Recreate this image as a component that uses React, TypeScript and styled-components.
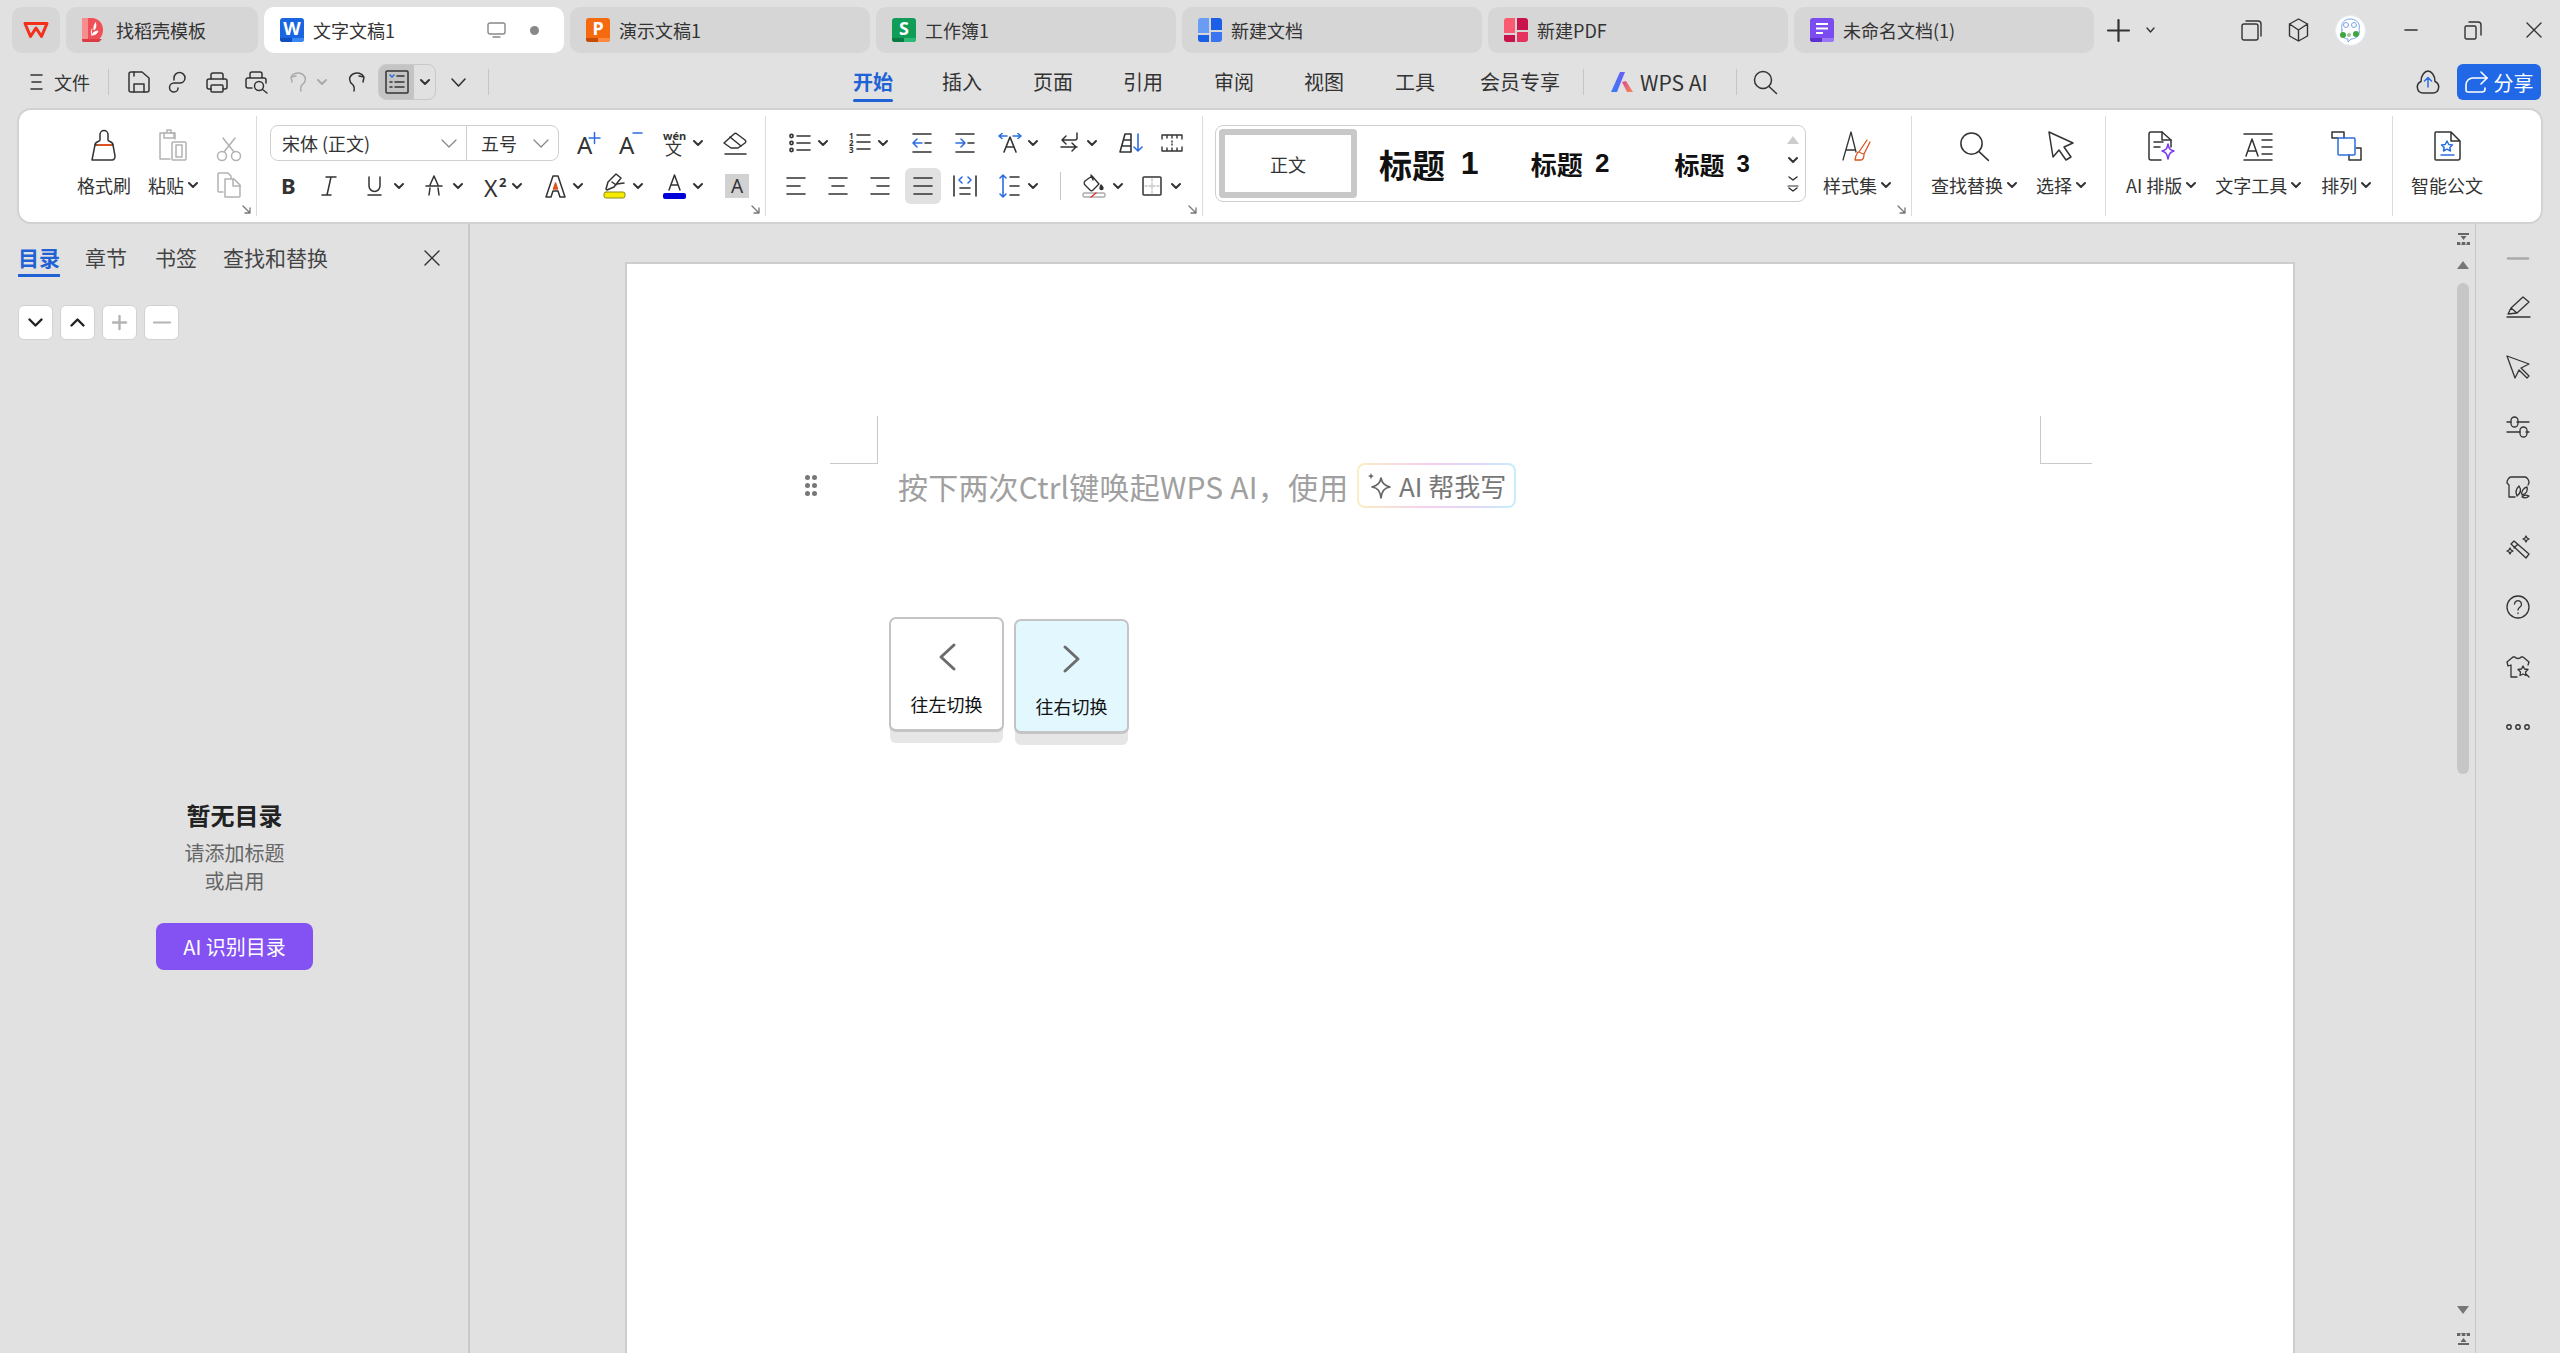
import React from "react";
import styled, { createGlobalStyle } from "styled-components";

const FONT = `"Noto Sans CJK SC", "Noto Sans", sans-serif`;

const GlobalStyle = createGlobalStyle`
  html, body { margin: 0; padding: 0; background: #e1e1e1; }
  body { font-family: ${FONT}; color: #333; }
`;

const Page = styled.div`
  width: 2560px;
  height: 1353px;
  overflow: hidden;
  display: flex;
  flex-direction: column;
  background: #e1e1e1;
`;

/* ---------- icon helpers ---------- */

const Ic = styled.svg.attrs<{ $w: number; $h: number; $c?: string; $sw?: number }>((p) => ({
  width: p.$w,
  height: p.$h,
  viewBox: `0 0 ${p.$w} ${p.$h}`,
  fill: "none",
  stroke: p.$c || "#333",
  strokeWidth: p.$sw || 1.5,
  strokeLinecap: "round",
  strokeLinejoin: "round",
}))`
  flex-shrink: 0;
  display: block;
  overflow: visible;
`;

const Gl = styled.text<{ $c?: string }>`
  fill: ${(p) => p.$c || "#333"};
  stroke: none;
  font-family: "Noto Sans", "Noto Sans CJK SC", sans-serif;
`;

const Chev = ({ c }: { c?: string }) => (
  <Ic $w={10} $h={6} $sw={2} $c={c || "#333"}>
    <path d="M1 1l4 4 4-4" />
  </Ic>
);

const SoftChev = () => (
  <Ic $w={16} $h={9} $sw={1.3} $c="#888">
    <path d="M1 1l7 7 7-7" />
  </Ic>
);

/* ---------- title bar ---------- */

const TabBar = styled.div`
  height: 56px;
  flex: none;
  display: flex;
  align-items: flex-start;
  padding: 7px 0 0 12px;
  gap: 6px;
  box-sizing: border-box;
`;

const LogoTab = styled.div`
  width: 48px;
  height: 46px;
  border-radius: 10px;
  background: #d6d6d6;
  display: flex;
  align-items: center;
  justify-content: center;
`;

const Tab = styled.div<{ $active?: boolean; $w?: number; $gap?: number }>`
  width: ${(p) => p.$w || 300}px;
  height: 46px;
  box-sizing: border-box;
  padding: 0 25px 0 16px;
  border-radius: 10px;
  background: ${(p) => (p.$active ? "#fff" : "#d6d6d6")};
  display: flex;
  align-items: center;
  gap: ${(p) => p.$gap || 9}px;
`;

const TabLabel = styled.span`
  font-size: 18px;
  line-height: 26px;
  color: #333;
  white-space: nowrap;
`;

const TabStatus = styled.div`
  margin-left: auto;
  display: flex;
  align-items: center;
  gap: 24px;
`;

const UnsavedDot = styled.span`
  width: 9px;
  height: 9px;
  border-radius: 50%;
  background: #888;
`;

const TabActions = styled.div`
  display: flex;
  align-items: center;
  height: 46px;
  padding-left: 7px;
  gap: 16px;
`;

const WindowButtons = styled.div`
  margin-left: 70px;
  display: flex;
  align-items: center;
  height: 46px;
`;

const WinSlot = styled.div<{ $ml: number }>`
  margin-left: ${(p) => p.$ml}px;
  display: flex;
`;

const Tile = ({ color, dark, light, letter }: { color: string; dark: string; light: string; letter: string }) => (
  <Ic $w={24} $h={24} $c="none">
    <rect width={24} height={24} rx={3} fill={color} />
    <path d="M0 20h12v4H3a3 3 0 0 1-3-3z" fill={dark} />
    <path d="M12 20h12v1a3 3 0 0 1-3 3h-9z" fill={light} />
    <Gl x={12} y={17} fontSize={18} fontWeight={700} textAnchor="middle" $c="#fff">
      {letter}
    </Gl>
  </Ic>
);

const Quad = ({ a, b, c, d }: { a: string; b: string; c: string; d: string }) => (
  <Ic $w={24} $h={24} $c="none">
    <path d="M3 0h8v15H0V3a3 3 0 0 1 3-3z" fill={a} />
    <path d="M13 0h8a3 3 0 0 1 3 3v9H13z" fill={b} />
    <path d="M0 17h11v7H3a3 3 0 0 1-3-3z" fill={c} />
    <path d="M13 14h11v7a3 3 0 0 1-3 3h-8z" fill={d} />
  </Ic>
);

const DaokeIcon = () => (
  <Ic $w={22} $h={24} $c="none">
    <path d="M2 0h8a11 12 0 0 1 0 24H2a2 2 0 0 1-2-2V2a2 2 0 0 1 2-2z" fill="#ef5058" />
    <path d="M2 0h4v24H2a2 2 0 0 1-2-2V2a2 2 0 0 1 2-2z" fill="#f88d8e" />
    <path d="M0 21h20l-3 3H2a2 2 0 0 1-2-2z" fill="#d93c42" />
    <path d="M13.5 5c1 3 .5 5-1.5 7 -.5-3 0-5 1.500-7zM10 17c3 0 5-1 6-4-3 0-5 1-6 4zM10 17c-1-2-1-4 0-6" fill="#fff" stroke="#fff" strokeWidth={0.8} />
  </Ic>
);

const DocTile = () => (
  <Ic $w={24} $h={24} $c="none">
    <rect width={24} height={24} rx={3} fill="#7b4cf0" />
    <path d="M0 20h12v4H3a3 3 0 0 1-3-3z" fill="#5d30cf" />
    <path d="M12 20h12v1a3 3 0 0 1-3 3h-9z" fill="#9a78f5" />
    <path d="M6 6h12M6 10.500h12M6 15h7" stroke="#fff" strokeWidth={2} strokeLinecap="butt" />
  </Ic>
);

const WpsLogo = () => (
  <Ic $w={26} $h={18} $c="#f2301c" $sw={3}>
    <path d="M2 2.500h22l-5.500 13L13 7l-5.500 8.500z" />
  </Ic>
);

const Monitor = () => (
  <Ic $w={19} $h={16} $c="#888" $sw={1.4}>
    <rect x={1} y={1} width={17} height={11} rx={2} />
    <path d="M6 15h7" />
  </Ic>
);

/* ---------- menu bar ---------- */

const MenuBar = styled.div`
  height: 54px;
  flex: none;
  display: flex;
  align-items: center;
  box-sizing: border-box;
  padding-bottom: 2px;
`;

const QuickAccess = styled.div`
  flex: 0 0 853px;
  box-sizing: border-box;
  padding-left: 30px;
  display: flex;
  align-items: center;
`;

const Slot = styled.div<{ $ml?: number; $gap?: number }>`
  display: flex;
  align-items: center;
  flex-shrink: 0;
  margin-left: ${(p) => p.$ml || 0}px;
  gap: ${(p) => (p.$gap === undefined ? 7 : p.$gap)}px;
`;

const FileLabel = styled.span`
  font-size: 18px;
  margin-left: 11px;
`;

const VLine = styled.span<{ $ml?: number; $h?: number }>`
  flex: none;
  width: 1px;
  height: ${(p) => p.$h || 26}px;
  background: #c6c6c6;
  margin-left: ${(p) => p.$ml || 0}px;
`;

const OutlineToggle = styled.div`
  margin-left: 13px;
  width: 58px;
  height: 36px;
  box-sizing: border-box;
  border: 1px solid #c9c9c9;
  border-radius: 8px;
  display: flex;
  overflow: hidden;
`;

const OutlineIcon = styled.div`
  width: 35px;
  background: #c4c4c4;
  display: flex;
  align-items: center;
  justify-content: center;
`;

const OutlineCaret = styled.div`
  flex: 1;
  display: flex;
  align-items: center;
  justify-content: center;
`;

const RibbonTabs = styled.div`
  display: flex;
  align-items: center;
  height: 52px;
`;

const RibbonTab = styled.div<{ $active?: boolean; $ml?: number }>`
  position: relative;
  font-size: 20px;
  line-height: 52px;
  height: 52px;
  margin-left: ${(p) => p.$ml || 0}px;
  color: ${(p) => (p.$active ? "#1e62d6" : "#333")};
  font-weight: ${(p) => (p.$active ? 700 : 400)};
  &::after {
    content: "";
    display: ${(p) => (p.$active ? "block" : "none")};
    position: absolute;
    left: 0;
    right: 0;
    bottom: 6px;
    height: 3px;
    border-radius: 2px;
    background: #1e62d6;
  }
`;

const AiLabel = styled.span`
  font-size: 21px;
  color: #333;
`;

const CloudShare = styled.div`
  margin-left: auto;
  padding-right: 19px;
  display: flex;
  align-items: center;
`;

const ShareButton = styled.div`
  margin-left: 17px;
  width: 84px;
  height: 36px;
  border-radius: 6px;
  background: #2068e6;
  color: #fff;
  font-size: 20px;
  display: flex;
  align-items: center;
  justify-content: center;
  gap: 5px;
`;

/* ---------- ribbon ---------- */

const Ribbon = styled.div`
  flex: none;
  margin: 0 19px;
  height: 112px;
  box-sizing: border-box;
  padding: 6px 0;
  background: #fff;
  border-radius: 12px;
  box-shadow: 0 0 0 2px #d2d2d2;
  display: flex;
`;

const Group = styled.div<{ $w: number; $last?: boolean; $pl?: number }>`
  position: relative;
  flex: 0 0 ${(p) => p.$w}px;
  box-sizing: border-box;
  padding: 9px 0 0 ${(p) => p.$pl || 0}px;
  border-right: ${(p) => (p.$last ? "none" : "1px solid #dcdcdc")};
`;

const InlineGroup = styled(Group)`
  display: flex;
`;

const Rows = styled.div`
  display: flex;
  flex-direction: column;
  gap: 7px;
`;

const Row = styled.div`
  display: flex;
  align-items: center;
  height: 36px;
`;

const Launcher = styled.span`
  position: absolute;
  right: 5px;
  bottom: 2px;
  display: flex;
`;

const LauncherIcon = () => (
  <Launcher>
    <Ic $w={9} $h={9} $c="#777" $sw={1.3}>
      <path d="M1 1l7 7M8 3v5H3" />
    </Ic>
  </Launcher>
);

const LargeTool = styled.div<{ $ml?: number; $w?: number }>`
  flex: none;
  width: ${(p) => (p.$w ? `${p.$w}px` : "auto")};
  margin-left: ${(p) => p.$ml || 0}px;
  display: flex;
  flex-direction: column;
  align-items: center;
  gap: 6px;
`;

const LargeIcon = styled.div`
  height: 36px;
  display: flex;
  align-items: flex-end;
`;

const LargeLabel = styled.div`
  height: 36px;
  display: flex;
  align-items: center;
  gap: 4px;
  font-size: 18px;
  white-space: nowrap;
  color: #333;
`;

const FontBox = styled.div`
  width: 289px;
  height: 36px;
  box-sizing: border-box;
  border: 1px solid #cfcfcf;
  border-radius: 8px;
  display: flex;
`;

const FontField = styled.div<{ $w?: number }>`
  width: ${(p) => (p.$w ? `${p.$w}px` : "auto")};
  flex: ${(p) => (p.$w ? "none" : "1")};
  box-sizing: border-box;
  padding: 0 9px 0 ${(p) => (p.$w ? 11 : 14)}px;
  border-right: ${(p) => (p.$w ? "1px solid #cfcfcf" : "none")};
  display: flex;
  align-items: center;
  justify-content: space-between;
`;

const FontValue = styled.span`
  font-size: 18px;
  line-height: 26px;
  white-space: nowrap;
`;

const ShadedIcon = styled.div`
  margin-left: 22px;
  width: 24px;
  height: 24px;
  background: #d2d2d2;
  display: flex;
  align-items: center;
  justify-content: center;
  font-size: 19px;
  line-height: 24px;
  font-family: "Noto Sans", sans-serif;
`;

const ActiveAlign = styled.div`
  margin-left: 15px;
  width: 36px;
  height: 36px;
  border-radius: 6px;
  background: #e1e1e1;
  display: flex;
  align-items: center;
  justify-content: center;
`;

const Gallery = styled.div`
  width: 591px;
  height: 77px;
  box-sizing: border-box;
  border: 1px solid #cfcfcf;
  border-radius: 8px;
  padding: 3px 0 3px 3px;
  display: flex;
  align-items: center;
`;

const StyleCurrent = styled.div`
  width: 138px;
  height: 69px;
  box-sizing: border-box;
  border: 6px solid #c8c8c8;
  border-radius: 4px;
  display: flex;
  align-items: center;
  justify-content: center;
  font-size: 18px;
  color: #333;
`;

const StyleHeading = styled.div<{ $ml: number; $size: number; $num: number }>`
  margin-left: ${(p) => p.$ml}px;
  font-size: ${(p) => p.$size}px;
  font-weight: 700;
  color: #111;
  display: flex;
  align-items: center;
  gap: 0.48em;
  white-space: nowrap;
  & > b {
    font-size: ${(p) => p.$num}px;
    font-family: "Liberation Sans", sans-serif;
  }
`;

const GalleryScroll = styled.div`
  margin-left: auto;
  width: 24px;
  height: 66px;
  display: flex;
  flex-direction: column;
  align-items: center;
  justify-content: space-between;
  padding: 5px 0;
  box-sizing: border-box;
`;

/* ---------- main area ---------- */

const Main = styled.div`
  flex: 1;
  min-height: 0;
  margin-top: 2px;
  display: flex;
`;

const Panel = styled.aside`
  flex: 0 0 470px;
  box-sizing: border-box;
  border-right: 2px solid #c8c8c8;
  padding: 0 0 0 18px;
  display: flex;
  flex-direction: column;
`;

const PanelHeader = styled.div`
  height: 50px;
  display: flex;
  align-items: flex-start;
  padding-right: 28px;
`;

const PanelTab = styled.div<{ $active?: boolean; $ml?: number }>`
  margin-left: ${(p) => p.$ml || 0}px;
  font-size: 21px;
  line-height: 30px;
  padding-top: 18px;
  height: 53px;
  box-sizing: border-box;
  white-space: nowrap;
  color: ${(p) => (p.$active ? "#1e62d6" : "#444")};
  font-weight: ${(p) => (p.$active ? 700 : 400)};
  border-bottom: ${(p) => (p.$active ? "3px solid #1e62d6" : "0")};
`;

const PanelClose = styled.div`
  margin-left: auto;
  padding-top: 26px;
`;

const OutlineTools = styled.div`
  margin-top: 31px;
  display: flex;
  gap: 7px;
`;

const OutlineTool = styled.div`
  width: 35px;
  height: 35px;
  box-sizing: border-box;
  background: #fff;
  border: 1px solid #d2d2d2;
  border-radius: 6px;
  display: flex;
  align-items: center;
  justify-content: center;
`;

const EmptyState = styled.div`
  width: 433px;
  margin-top: 458px;
  display: flex;
  flex-direction: column;
  align-items: center;
`;

const EmptyTitle = styled.div`
  font-size: 24px;
  font-weight: 700;
  line-height: 34px;
  color: #222;
`;

const EmptyHint = styled.div`
  margin-top: 7px;
  font-size: 20px;
  line-height: 28px;
  color: #666;
  text-align: center;
`;

const AiButton = styled.div`
  margin-top: 28px;
  width: 157px;
  height: 47px;
  border-radius: 8px;
  background: #8452f2;
  color: #fff;
  font-size: 20px;
  display: flex;
  align-items: center;
  justify-content: center;
`;

const DocArea = styled.div`
  flex: 1;
  min-width: 0;
  padding-left: 155px;
  padding-top: 38px;
  overflow: hidden;
`;

const Sheet = styled.div`
  width: 1670px;
  height: 1100px;
  box-sizing: border-box;
  background: #fff;
  border: 2px solid #cdcdcd;
  padding-top: 152px;
`;

const CropMarks = styled.div`
  display: flex;
  justify-content: space-between;
  padding: 0 201px 0 203px;
`;

const CropMark = styled.div<{ $side: "left" | "right" }>`
  width: ${(p) => (p.$side === "left" ? 48 : 52)}px;
  height: 48px;
  box-sizing: border-box;
  border-bottom: 1px solid #c9c9c9;
  border-${(p) => (p.$side === "left" ? "right" : "left")}: 1px solid #c9c9c9;
`;

const PromptRow = styled.div`
  margin-top: -1px;
  padding-left: 178px;
  display: flex;
  align-items: center;
  height: 45px;
`;

const DragHandle = styled.div`
  width: 12px;
  display: grid;
  grid-template-columns: 5px 5px;
  justify-content: space-between;
  row-gap: 3px;
  & > i {
    width: 5px;
    height: 5px;
    border-radius: 50%;
    background: #777;
  }
`;

const PromptText = styled.div`
  margin-left: 81px;
  font-size: 30px;
  letter-spacing: 0.2px;
  color: #a0a0a0;
  white-space: nowrap;
  width: 447px;
`;

const AiChip = styled.div`
  margin-left: 12px;
  width: 159px;
  height: 45px;
  box-sizing: border-box;
  border: 2px solid transparent;
  border-radius: 8px;
  background: linear-gradient(#fff, #fff) padding-box,
    linear-gradient(90deg, #fbeec4, #f5cfee 45%, #dcd8f8 75%, #c9eefb) border-box;
  display: flex;
  align-items: center;
  gap: 6px;
  padding-left: 8px;
  font-size: 26px;
  color: #777;
  white-space: nowrap;
`;

const KeysRow = styled.div`
  margin: 109px 0 0 262px;
  display: flex;
  align-items: flex-start;
  gap: 10px;
`;

const KeyCap = styled.div<{ $on?: boolean }>`
  width: 115px;
  height: 115px;
  margin-top: ${(p) => (p.$on ? 2 : 0)}px;
  box-sizing: border-box;
  border: 2px solid #c4c4c4;
  border-bottom-width: 3px;
  border-radius: 7px;
  background: ${(p) => (p.$on ? "#e2f7fe" : "#fff")};
  box-shadow: 0 12px 0 -1px #e6e6e6;
  display: flex;
  flex-direction: column;
  align-items: center;
  padding-top: 24px;
  gap: 20px;
  font-size: 18px;
  color: #111;
`;

const ScrollColumn = styled.div`
  flex: 0 0 24px;
  box-sizing: border-box;
  padding: 9px 0 0 6px;
  display: flex;
  flex-direction: column;
`;

const ScrollThumb = styled.div`
  width: 12px;
  height: 491px;
  border-radius: 6px;
  background: #c6c6c6;
  margin-top: 14px;
`;

const ScrollFoot = styled.div`
  margin-top: auto;
  padding-bottom: 8px;
  display: flex;
  flex-direction: column;
  gap: 18px;
`;

const ScrollUp = styled.div`
  margin-top: 15px;
`;

const SideBar = styled.div`
  flex: 0 0 85px;
  box-sizing: border-box;
  border-left: 1px solid #c8c8c8;
  padding-top: 15px;
  display: flex;
  flex-direction: column;
  align-items: center;
`;

const SideCell = styled.div<{ $h?: number }>`
  height: ${(p) => p.$h || 60}px;
  display: flex;
  align-items: center;
  justify-content: center;
`;

/* ---------- glyph-size drawings ---------- */

const MenuLines = () => (
  <Ic $w={13} $h={16} $sw={1.6}>
    <path d="M1 1h11M2 8h9M1 15h11" />
  </Ic>
);

const ToolbarSave = () => (
  <Ic $w={22} $h={22}>
    <path d="M3 1h11l7 6v12a2 2 0 0 1-2 2H3a2 2 0 0 1-2-2V3a2 2 0 0 1 2-2z" />
    <path d="M6 21v-8h10v8M6 1v4" />
  </Ic>
);

const ToolbarLink = () => (
  <Ic $w={19} $h={22}>
    <path d="M6 9V7a5.500 5.500 0 0 1 11 0c0 3-2.500 5-5.500 5H6a4.500 4.500 0 0 0 0 9c2.500 0 4-2 4-4" />
  </Ic>
);

const ToolbarPrint = () => (
  <Ic $w={22} $h={21}>
    <path d="M5 7V3a2 2 0 0 1 2-2h8a2 2 0 0 1 2 2v4" />
    <path d="M5 17H3a2 2 0 0 1-2-2V9a2 2 0 0 1 2-2h16a2 2 0 0 1 2 2v6a2 2 0 0 1-2 2h-2" />
    <rect x={5} y={13} width={12} height={7} rx={1} />
  </Ic>
);

const ToolbarPreview = () => (
  <Ic $w={23} $h={23}>
    <path d="M5 7V3a2 2 0 0 1 2-2h8a2 2 0 0 1 2 2v4M7 17H3a2 2 0 0 1-2-2V9a2 2 0 0 1 2-2h16a2 2 0 0 1 2 2v3" />
    <circle cx={14} cy={15} r={4.500} />
    <path d="M17.500 18.500L22 22" />
  </Ic>
);

const ToolbarUndo = ({ c, flip }: { c: string; flip?: boolean }) => (
  <Ic $w={17} $h={22} $c={c} style={flip ? { transform: "scaleX(-1)" } : undefined}>
    <path d="M1 6c2-4 7-5 11-3 5 3 4 8 0 11-1 1-1.500 3-1 6M1 6l1 5M1 6l5-1" />
  </Ic>
);

const OutlineGlyph = () => (
  <Ic $w={24} $h={24}>
    <rect x={1} y={1} width={22} height={22} rx={1} />
    <path d="M5 5l2 2 2-2" stroke="#2b6de0" />
    <path d="M12 6h7M5 12h2M10 12h9M5 17h2M10 17h9" />
  </Ic>
);

const AiMark = () => (
  <Ic $w={24} $h={22} $c="none">
    <defs>
      <linearGradient id="aiL" x1="0" y1="1" x2="1" y2="0">
        <stop offset="0" stopColor="#3b7bf6" />
        <stop offset="1" stopColor="#6a5cf5" />
      </linearGradient>
      <linearGradient id="aiR" x1="0" y1="0" x2="1" y2="1">
        <stop offset="0" stopColor="#e0458f" />
        <stop offset="1" stopColor="#f58a5a" />
      </linearGradient>
    </defs>
    <path d="M10 1h5L7 21H1z" fill="url(#aiL)" />
    <path d="M12 11l4-1 7 11h-6z" fill="url(#aiR)" />
  </Ic>
);

const SearchGlyph = ({ size, sw }: { size: number; sw?: number }) => (
  <Ic $w={size} $h={size} $sw={sw || 1.5}>
    <g transform={`scale(${size / 24})`}>
      <circle cx={10} cy={10} r={8.500} />
      <path d="M16 16.500l7.500 7" />
    </g>
  </Ic>
);

const CloudUp = () => (
  <Ic $w={24} $h={28}>
    <path d="M7 25a6 6 0 0 1-2-11.500C5 7 9 3 12 3s7 4 7 10.500A6 6 0 0 1 17 25z" />
    <path d="M12 19v-9M8.500 13l3.500-3.500 3.500 3.500" stroke="#2b6de0" />
  </Ic>
);

const ShareArrow = () => (
  <Ic $w={24} $h={24} $c="#fff" $sw={1.6}>
    <path d="M3 22h14a3 3 0 0 0 3-3v-1M3 22a2 2 0 0 1-2-2v-5c0-4 3-7 7-7h14" />
    <path d="M16 2l6 6-6 6" />
  </Ic>
);

const BrushGlyph = () => (
  <Ic $w={30} $h={31}>
    <path d="M11 10V4.500a4 4 0 0 1 8 0V10c0 2 5 1 5 5H6c0-4 5-3 5-5z" />
    <path d="M9 15h13" stroke="#d9541e" strokeWidth={2} />
    <path d="M6 15L3 30h20c2 0 3-2 3-4l-2-11" />
  </Ic>
);

const PasteGlyph = () => (
  <Ic $w={30} $h={32} $c="#b2b2b2">
    <path d="M7 4H2v26h10M17 10V4h-5" />
    <path d="M6 4h10v5H6zM9 4V1h4v3" />
    <rect x={14} y={13} width={14} height={18} rx={1} />
    <path d="M18 16h6v12h-6z" />
  </Ic>
);

const ScissorsGlyph = () => (
  <Ic $w={26} $h={24} $c="#b2b2b2">
    <circle cx={6} cy={19} r={4.500} />
    <circle cx={20} cy={19} r={4.500} />
    <path d="M8 15L19 1M18 15L7 1" />
  </Ic>
);

const CopyGlyph = () => (
  <Ic $w={24} $h={26} $c="#b2b2b2">
    <path d="M6 20H2a1 1 0 0 1-1-1V2a1 1 0 0 1 1-1h9l3 3v3" />
    <path d="M8 7h9l6 6v11a1 1 0 0 1-1 1H8z" />
    <path d="M16 7v7h7" />
  </Ic>
);

const FontGrow = ({ plus }: { plus: boolean }) => (
  <Ic $w={24} $h={26} $c="#2b6de0">
    <Gl x={0} y={24} fontSize={24}>A</Gl>
    {plus ? <path d="M12 8h11M17.500 2.500v11" /> : <path d="M14 3h9" />}
  </Ic>
);

const PinyinGlyph = () => (
  <Ic $w={26} $h={24}>
    <Gl x={0} y={9} fontSize={11} fontWeight={700}>wén</Gl>
    <Gl x={2} y={24} fontSize={17} style={{ fontFamily: FONT }}>文</Gl>
  </Ic>
);

const EraserGlyph = () => (
  <Ic $w={24} $h={23}>
    <path d="M1 11l10-9c1-1 2-1 3 0l8 6c1 1 1 2 0 3l-7 5H8z" />
    <path d="M7 5l11 9M2 22h21" />
  </Ic>
);

const LetterBold = () => (
  <Ic $w={14} $h={22} $c="none">
    <Gl x={0} y={19} fontSize={22} fontWeight={700}>B</Gl>
  </Ic>
);

const LetterItalic = () => (
  <Ic $w={16} $h={22}>
    <path d="M5 2h10M1 20h9M10 2L6 20" />
  </Ic>
);

const LetterUnderline = () => (
  <Ic $w={15} $h={22}>
    <path d="M2 2v9a5.500 5.500 0 0 0 11 0V2M1 20h13" />
  </Ic>
);

const LetterStrike = () => (
  <Ic $w={18} $h={22}>
    <path d="M1 11h16M9 1L5 10M9 1l4 9M5 13l-1 7M13 13l1 7" />
  </Ic>
);

const LetterSuper = () => (
  <Ic $w={24} $h={24} $c="none">
    <Gl x={0} y={23} fontSize={23}>X</Gl>
    <Gl x={15} y={13} fontSize={13} fontWeight={700}>2</Gl>
  </Ic>
);

const LetterEffect = () => (
  <Ic $w={21} $h={24}>
    <path d="M1 23L8 2h5l7 21h-5l-2-6H8l-2 6z" />
    <path d="M10.500 9l-2 6h4z" fill="#d9541e" stroke="#d9541e" />
  </Ic>
);

const HighlightGlyph = () => (
  <Ic $w={23} $h={26}>
    <path d="M3 16l2-7 8-8 5 4-7 9-7 3zM9 9l4 3M14 11l7-1" />
    <rect x={1} y={19} width={21} height={6} rx={2} fill="#f5ea00" stroke="#8d8a20" strokeWidth={1} />
  </Ic>
);

const ColorGlyph = () => (
  <Ic $w={23} $h={26}>
    <path d="M6 17L11.500 2 17 17M8 12h7" />
    <rect x={0} y={20} width={23} height={6} rx={2} fill="#0000d8" stroke="none" />
  </Ic>
);

const BulletList = () => (
  <Ic $w={22} $h={20} $sw={1.6}>
    <circle cx={2.500} cy={3} r={1.600} />
    <circle cx={2.500} cy={10} r={1.600} />
    <circle cx={2.500} cy={17} r={1.600} />
    <path d="M8 3h13M8 10h13M8 17h13" />
  </Ic>
);

const NumberList = () => (
  <Ic $w={22} $h={22} $sw={1.6}>
    <Gl x={0} y={7} fontSize={8} fontWeight={700}>1</Gl>
    <Gl x={0} y={14} fontSize={8} fontWeight={700}>2</Gl>
    <Gl x={0} y={21} fontSize={8} fontWeight={700}>3</Gl>
    <path d="M8 3h13M8 10h13M8 17h13" />
  </Ic>
);

const IndentGlyph = ({ out }: { out: boolean }) => (
  <Ic $w={20} $h={20} $sw={1.6}>
    <path d="M1 1h18M1 19h18M13 10h6" />
    {out ? (
      <path d="M1 10h9M5 6l-4 4 4 4" stroke="#2b6de0" />
    ) : (
      <path d="M1 10h9M6 6l4 4-4 4" stroke="#2b6de0" />
    )}
  </Ic>
);

const TextDirection = () => (
  <Ic $w={24} $h={20} $sw={1.6} $c="#2b6de0">
    <path d="M1 3h8M4 0.500L1 3l3 2.500M15 3h8M20 0.500L23 3l-3 2.500" />
    <path d="M6 19L12 4l6 15M8 14h8" stroke="#333" />
  </Ic>
);

const SwapGlyph = () => (
  <Ic $w={18} $h={22} $sw={1.5}>
    <path d="M17 1v5a2 2 0 0 1-2 2H2M6 4L2 8l4 4M1 15h16M12 11l4 4-4 4" />
  </Ic>
);

const SortGlyph = () => (
  <Ic $w={24} $h={20} $sw={1.6}>
    <path d="M1 19L6 1h6v18zM3 13h9M5 7h7" />
    <path d="M19 1v17M15 14l4 4 4-4" stroke="#2b6de0" />
  </Ic>
);

const RulerGlyph = () => (
  <Ic $w={22} $h={18} $sw={1.4}>
    <path d="M1 1h20M1 1v4M21 1v4M6 1v3M11 1v3M16 1v3M1 17h20M1 17v-4M21 17v-4M6 17v-3M11 17v-3M16 17v-3M11 7v1M11 10v1" />
  </Ic>
);

const AlignGlyph = ({ mode }: { mode: "left" | "center" | "right" | "full" }) => {
  const mid = { left: "M1 10h13", center: "M4 10h12", right: "M7 10h12", full: "M1 10h18" }[mode];
  return (
    <Ic $w={20} $h={20} $sw={1.6}>
      <path d="M1 2h18M1 18h18" />
      <path d={mid} />
    </Ic>
  );
};

const DistributeGlyph = () => (
  <Ic $w={24} $h={22} $sw={1.6}>
    <path d="M1 1v20M23 1v20M7 13h10M7 19h10" />
    <path d="M9 2L6 5l3 3M15 2l3 3-3 3" stroke="#2b6de0" />
  </Ic>
);

const SpacingGlyph = () => (
  <Ic $w={21} $h={24} $sw={1.6}>
    <path d="M11 3h9M11 12h9M11 21h9" />
    <path d="M4 1v22M1 4l3-3 3 3M1 20l3 3 3-3" stroke="#2b6de0" />
  </Ic>
);

const FillGlyph = () => (
  <Ic $w={24} $h={24} $sw={1.4}>
    <path d="M3 7l7-5 7 8-6 6c-1 1-2 1-3 0L3 11c-1-1-1-3 0-4zM9 1l2 5" />
    <path d="M19 11c1 1 2 2 2 3a1.500 1.500 0 0 1-3 0c0-1 .5-2 1-3z" fill="#333" />
    <rect x={1} y={19} width={22} height={4} rx={1.500} stroke="#aaa" />
    <path d="M9 23l5-4" stroke="#e03030" />
  </Ic>
);

const BorderGlyph = () => (
  <Ic $w={20} $h={20} $sw={1.5}>
    <rect x={1} y={1} width={18} height={18} rx={1} />
    <path d="M10 3v14M3 10h14" stroke="#c8c8c8" strokeDasharray="2 2" />
  </Ic>
);

const StyleBrush = () => (
  <Ic $w={30} $h={30} $sw={1.3}>
    <path d="M1 29L9 1l5 20M4 19h9" />
    <path d="M17 21l8-12M22 23l6-12M16 21c-2 3-3 5-3 8h6c3 0 3-4 3-6z" stroke="#d9541e" />
  </Ic>
);

const CursorGlyph = () => (
  <Ic $w={28} $h={30}>
    <path d="M2 1l24 11-9 4 7 10-5 3-7-10-6 7z" />
  </Ic>
);

const AiLayout = () => (
  <Ic $w={28} $h={30}>
    <path d="M14 29H4a2 2 0 0 1-2-2V3a2 2 0 0 1 2-2h11l9 8v7" />
    <path d="M15 1v8h9M7 11h9M7 16h6" />
    <path d="M21 13c1 5 2 6 6 7-4 1-5 3-6 8-1-5-2-7-6-8 4-1 5-2 6-7z" stroke="#7a3cf2" />
  </Ic>
);

const TextTool = () => (
  <Ic $w={30} $h={28} $sw={1.5}>
    <path d="M1 1h28M1 27h28M3 23L9 6l6 17M5 18h8M19 7h10M19 14h10M19 21h10" />
  </Ic>
);

const ArrangeGlyph = () => (
  <Ic $w={31} $h={30}>
    <path d="M7 7H1V1h12v6M25 17h5v12H18v-5" />
    <rect x={7} y={7} width={17} height={17} rx={1} stroke="#2b6de0" />
  </Ic>
);

const SmartDoc = () => (
  <Ic $w={27} $h={30}>
    <path d="M2 1h15l9 9v17a2 2 0 0 1-2 2H2a1 1 0 0 1-1-1V2a1 1 0 0 1 1-1zM17 1v9h9" />
    <path d="M13 10l1.800 3.500 3.700.5-2.700 2.500.7 3.500-3.500-1.800-3.500 1.800.7-3.500L7.500 14l3.700-.5z" stroke="#2b6de0" />
    <path d="M7 24h13" stroke="#2b6de0" />
  </Ic>
);

const TriUp = ({ c }: { c?: string }) => (
  <Ic $w={12} $h={8} $c="none">
    <path d="M6 0l6 8H0z" fill={c || "#777"} />
  </Ic>
);

const TriDown = () => (
  <Ic $w={12} $h={8} $c="none">
    <path d="M6 8L0 0h12z" fill="#777" />
  </Ic>
);

const FootToggle = ({ flip }: { flip?: boolean }) => (
  <Ic $w={13} $h={13} $c="none" style={flip ? { transform: "scaleY(-1)" } : undefined}>
    <path d="M1 0h11v2H1zM3.500 3h6L6.500 7z" fill="#666" />
    <path d="M0 9h13v3H0z" fill="#666" />
    <path d="M4 9v2M9 9v2" stroke="#e1e1e1" />
  </Ic>
);

const MoreChev = () => (
  <Ic $w={12} $h={16} $sw={1.5}>
    <path d="M2 1l4 3 4-3" />
    <path d="M1 10h10" strokeWidth={1.2} />
    <path d="M2 12l4 3 4-3" />
  </Ic>
);

const Side = {
  Pencil: () => (
    <Ic $w={24} $h={22} $sw={1.3}>
      <path d="M1 21h23M2 18l3-6L17 1l6 5-12 11-9 1zM5 12l6 5" />
    </Ic>
  ),
  Cursor: () => (
    <Ic $w={24} $h={24} $sw={1.3}>
      <path d="M1 1l22 8-8 4 8 8-2 2-8-8-4 8z" />
    </Ic>
  ),
  Sliders: () => (
    <Ic $w={24} $h={22} $sw={1.3}>
      <path d="M1 6h4M11 6h12M1 16h13M20 16h3" />
      <rect x={5} y={1} width={7} height={10} rx={3.500} />
      <rect x={14} y={11} width={7} height={10} rx={3.500} />
    </Ic>
  ),
  Leaf: () => (
    <Ic $w={24} $h={24} $sw={1.3}>
      <path d="M9 22H3V10L1 8c0-3 2-6 4-6h14c2 0 4 3 4 6l-1 2" />
      <path d="M11 21c-2-4 0-8 2-10 2 3 2 7-2 10zM16 20c-1-3 1-7 5-8 1 3 0 7-5 8zM16 22c2-2 5-2 7-1-2 2-5 2-7 1z" />
    </Ic>
  ),
  Wand: () => (
    <Ic $w={24} $h={24} $sw={1.3}>
      <path d="M8 6l15 13-3 4L5 9z M11 10l-3 3" />
      <path d="M20 1l1 2 2 1-2 1-1 2-1-2-2-1 2-1zM4 13l1 2 2 1-2 1-1 2-1-2-2-1 2-1z" />
    </Ic>
  ),
  Help: () => (
    <Ic $w={24} $h={24} $sw={1.3}>
      <circle cx={12} cy={12} r={11} />
      <path d="M8.500 9a3.500 3.500 0 1 1 5.500 3c-1.500 1-2 1.500-2 3" />
      <path d="M12 18v.5" />
    </Ic>
  ),
  Shirt: () => (
    <Ic $w={24} $h={24} $sw={1.3}>
      <path d="M11 22H5V10l-3 1-1-4 6-5h2c1 2 5 2 6 0h2l6 5-1 3" />
      <path d="M17 11l1.500 3 3.500.5-2.500 2.500.5 3.500-3-1.500-3 1.500.5-3.500L12 14.500l3.500-.5zM20 19l3 3" />
    </Ic>
  ),
  Dots: () => (
    <Ic $w={24} $h={8} $sw={1.4}>
      <circle cx={3} cy={4} r={2.200} />
      <circle cx={12} cy={4} r={2.200} />
      <circle cx={21} cy={4} r={2.200} />
    </Ic>
  ),
};

const Avatar = () => (
  <Ic $w={31} $h={31} $c="#7aa6ea" $sw={1}>
    <circle cx={15.500} cy={15.500} r={15} fill="#fff" stroke="#e4ecf8" />
    <path d="M7 15c-2-7 3-11 8-11s11 3 9 11c2 6-4 9-8 9l-3 3v-3c-3 0-7-2-6-9z" />
    <circle cx={11} cy={10} r={2.500} />
    <circle cx={19} cy={10} r={2.500} />
    <circle cx={8} cy={20} r={3} fill="#3ea63e" stroke="none" />
    <circle cx={21} cy={19} r={3} fill="#3ea63e" stroke="none" />
    <circle cx={14} cy={20} r={2} fill="#9bc6a0" stroke="none" />
  </Ic>
);

export default function App() {
  const tabs = [
    { label: "演示文稿1", icon: <Tile color="#f5690f" dark="#c44c04" light="#fb8a3e" letter="P" /> },
    { label: "工作簿1", icon: <Tile color="#0f9d58" dark="#0a7a43" light="#2dba76" letter="S" /> },
    { label: "新建文档", icon: <Quad a="#6a9bf5" b="#1a5fe6" c="#1a5fe6" d="#3a74f0" /> },
    { label: "新建PDF", icon: <Quad a="#fb5a70" b="#c8144a" c="#c8144a" d="#e6325f" /> },
    { label: "未命名文档(1)", icon: <DocTile /> },
  ];

  return (
    <Page>
      <GlobalStyle />

      <TabBar>
        <LogoTab>
          <WpsLogo />
        </LogoTab>
        <Tab $w={192} $gap={12}>
          <DaokeIcon />
          <TabLabel>找稻壳模板</TabLabel>
        </Tab>
        <Tab $active>
          <Tile color="#1a66e0" dark="#0e4fc0" light="#3b88f5" letter="W" />
          <TabLabel>文字文稿1</TabLabel>
          <TabStatus>
            <Monitor />
            <UnsavedDot />
          </TabStatus>
        </Tab>
        {tabs.map((t) => (
          <Tab key={t.label}>
            {t.icon}
            <TabLabel>{t.label}</TabLabel>
          </Tab>
        ))}
        <TabActions>
          <Ic $w={23} $h={23} $sw={2.2}>
            <path d="M11.500 1v21M1 11.500h21" />
          </Ic>
          <Ic $w={9} $h={6} $sw={1.4}>
            <path d="M1 1l3.500 4L8 1" />
          </Ic>
          <WindowButtons>
            <WinSlot $ml={0}>
              <Ic $w={21} $h={21} $sw={1.4}>
                <rect x={1} y={4} width={16} height={16} rx={2} />
                <path d="M5 1h12a3 3 0 0 1 3 3v12" />
              </Ic>
            </WinSlot>
            <WinSlot $ml={26}>
              <Ic $w={21} $h={24} $sw={1.4}>
                <path d="M10.500 1l9 5v12l-9 5-9-5V6zM1.500 6l9 6 9-6M10.500 12v11" />
              </Ic>
            </WinSlot>
            <WinSlot $ml={26}>
              <Avatar />
            </WinSlot>
            <WinSlot $ml={38}>
              <Ic $w={14} $h={2} $sw={1.6}>
                <path d="M1 1h12" />
              </Ic>
            </WinSlot>
            <WinSlot $ml={46}>
              <Ic $w={18} $h={19} $sw={1.4}>
                <rect x={1} y={5} width={11} height={13} rx={1.500} />
                <path d="M5 1h9a3 3 0 0 1 3 3v10" />
              </Ic>
            </WinSlot>
            <WinSlot $ml={44}>
              <Ic $w={16} $h={16} $sw={1.4}>
                <path d="M1 1l14 14M15 1L1 15" />
              </Ic>
            </WinSlot>
          </WindowButtons>
        </TabActions>
      </TabBar>

      <MenuBar>
        <QuickAccess>
          <MenuLines />
          <FileLabel>文件</FileLabel>
          <VLine $ml={18} />
          <Slot $ml={19}><ToolbarSave /></Slot>
          <Slot $ml={18}><ToolbarLink /></Slot>
          <Slot $ml={19}><ToolbarPrint /></Slot>
          <Slot $ml={17}><ToolbarPreview /></Slot>
          <Slot $ml={22} $gap={10}>
            <ToolbarUndo c="#aaa" />
            <Chev c="#aaa" />
          </Slot>
          <Slot $ml={21}><ToolbarUndo c="#333" flip /></Slot>
          <OutlineToggle>
            <OutlineIcon><OutlineGlyph /></OutlineIcon>
            <OutlineCaret><Chev /></OutlineCaret>
          </OutlineToggle>
          <Slot $ml={15}>
            <Ic $w={15} $h={9} $sw={1.6}>
              <path d="M1 1l6.500 7L14 1" />
            </Ic>
          </Slot>
          <VLine $ml={22} />
        </QuickAccess>
        <RibbonTabs>
          <RibbonTab $active>开始</RibbonTab>
          <RibbonTab $ml={49}>插入</RibbonTab>
          <RibbonTab $ml={51}>页面</RibbonTab>
          <RibbonTab $ml={50}>引用</RibbonTab>
          <RibbonTab $ml={51}>审阅</RibbonTab>
          <RibbonTab $ml={50}>视图</RibbonTab>
          <RibbonTab $ml={51}>工具</RibbonTab>
          <RibbonTab $ml={45}>会员专享</RibbonTab>
          <VLine $ml={23} />
          <Slot $ml={26} $gap={6}>
            <AiMark />
            <AiLabel>WPS AI</AiLabel>
          </Slot>
          <VLine $ml={28} />
          <Slot $ml={16}><SearchGlyph size={24} /></Slot>
        </RibbonTabs>
        <CloudShare>
          <CloudUp />
          <ShareButton>
            <ShareArrow />
            分享
          </ShareButton>
        </CloudShare>
      </MenuBar>

      <Ribbon>
        <InlineGroup $w={238} $pl={58}>
          <LargeTool $w={54}>
            <LargeIcon><BrushGlyph /></LargeIcon>
            <LargeLabel>格式刷</LargeLabel>
          </LargeTool>
          <LargeTool $ml={17}>
            <LargeIcon><PasteGlyph /></LargeIcon>
            <LargeLabel>粘贴<Chev /></LargeLabel>
          </LargeTool>
          <LargeTool $ml={18}>
            <LargeIcon><ScissorsGlyph /></LargeIcon>
            <LargeLabel><CopyGlyph /></LargeLabel>
          </LargeTool>
          <LauncherIcon />
        </InlineGroup>

        <Group $w={509} $pl={13}>
          <Rows>
            <Row>
              <FontBox>
                <FontField $w={196}><FontValue>宋体 (正文)</FontValue><SoftChev /></FontField>
                <FontField><FontValue>五号</FontValue><SoftChev /></FontField>
              </FontBox>
              <Slot $ml={18}><FontGrow plus /></Slot>
              <Slot $ml={18}><FontGrow plus={false} /></Slot>
              <Slot $ml={20} $gap={4}><PinyinGlyph /><Chev /></Slot>
              <Slot $ml={20}><EraserGlyph /></Slot>
            </Row>
            <Row>
              <Slot $ml={11}><LetterBold /></Slot>
              <Slot $ml={26}><LetterItalic /></Slot>
              <Slot $ml={30} $gap={12}><LetterUnderline /><Chev /></Slot>
              <Slot $ml={21} $gap={10}><LetterStrike /><Chev /></Slot>
              <Slot $ml={21} $gap={4}><LetterSuper /><Chev /></Slot>
              <Slot $ml={23}><LetterEffect /><Chev /></Slot>
              <Slot $ml={20}><HighlightGlyph /><Chev /></Slot>
              <Slot $ml={20}><ColorGlyph /><Chev /></Slot>
              <ShadedIcon>A</ShadedIcon>
            </Row>
          </Rows>
          <LauncherIcon />
        </Group>

        <Group $w={437}>
          <Rows>
            <Row>
              <Slot $ml={23}><BulletList /><Chev /></Slot>
              <Slot $ml={21}><NumberList /><Chev /></Slot>
              <Slot $ml={24}><IndentGlyph out /></Slot>
              <Slot $ml={23}><IndentGlyph out={false} /></Slot>
              <Slot $ml={23} $gap={6}><TextDirection /><Chev /></Slot>
              <Slot $ml={22} $gap={9}><SwapGlyph /><Chev /></Slot>
              <Slot $ml={22}><SortGlyph /></Slot>
              <Slot $ml={18}><RulerGlyph /></Slot>
            </Row>
            <Row>
              <Slot $ml={20}><AlignGlyph mode="left" /></Slot>
              <Slot $ml={22}><AlignGlyph mode="center" /></Slot>
              <Slot $ml={22}><AlignGlyph mode="right" /></Slot>
              <ActiveAlign><AlignGlyph mode="full" /></ActiveAlign>
              <Slot $ml={12}><DistributeGlyph /></Slot>
              <Slot $ml={22} $gap={8}><SpacingGlyph /><Chev /></Slot>
              <VLine $ml={22} $h={28} />
              <Slot $ml={21}><FillGlyph /><Chev /></Slot>
              <Slot $ml={19} $gap={9}><BorderGlyph /><Chev /></Slot>
            </Row>
          </Rows>
          <LauncherIcon />
        </Group>

        <InlineGroup $w={709} $pl={12}>
          <Gallery>
            <StyleCurrent>正文</StyleCurrent>
            <StyleHeading $ml={22} $size={33} $num={32}>标题<b>1</b></StyleHeading>
            <StyleHeading $ml={52} $size={26} $num={26}>标题<b>2</b></StyleHeading>
            <StyleHeading $ml={65} $size={25} $num={24}>标题<b>3</b></StyleHeading>
            <GalleryScroll>
              <TriUp c="#ccc" />
              <Chev />
              <MoreChev />
            </GalleryScroll>
          </Gallery>
          <LargeTool $ml={17}>
            <LargeIcon><StyleBrush /></LargeIcon>
            <LargeLabel>样式集<Chev /></LargeLabel>
          </LargeTool>
          <LauncherIcon />
        </InlineGroup>

        <InlineGroup $w={194}>
          <LargeTool $ml={19}>
            <LargeIcon><SearchGlyph size={30} sw={1.2} /></LargeIcon>
            <LargeLabel>查找替换<Chev /></LargeLabel>
          </LargeTool>
          <LargeTool $ml={19}>
            <LargeIcon><CursorGlyph /></LargeIcon>
            <LargeLabel>选择<Chev /></LargeLabel>
          </LargeTool>
        </InlineGroup>

        <InlineGroup $w={287}>
          <LargeTool $ml={20}>
            <LargeIcon><AiLayout /></LargeIcon>
            <LargeLabel>AI 排版<Chev /></LargeLabel>
          </LargeTool>
          <LargeTool $ml={19}>
            <LargeIcon><TextTool /></LargeIcon>
            <LargeLabel>文字工具<Chev /></LargeLabel>
          </LargeTool>
          <LargeTool $ml={20}>
            <LargeIcon><ArrangeGlyph /></LargeIcon>
            <LargeLabel>排列<Chev /></LargeLabel>
          </LargeTool>
        </InlineGroup>

        <InlineGroup $w={148} $last>
          <LargeTool $ml={18}>
            <LargeIcon><SmartDoc /></LargeIcon>
            <LargeLabel>智能公文</LargeLabel>
          </LargeTool>
        </InlineGroup>
      </Ribbon>

      <Main>
        <Panel>
          <PanelHeader>
            <PanelTab $active>目录</PanelTab>
            <PanelTab $ml={25}>章节</PanelTab>
            <PanelTab $ml={28}>书签</PanelTab>
            <PanelTab $ml={26}>查找和替换</PanelTab>
            <PanelClose>
              <Ic $w={16} $h={16} $sw={1.4}>
                <path d="M1 1l14 14M15 1L1 15" />
              </Ic>
            </PanelClose>
          </PanelHeader>
          <OutlineTools>
            <OutlineTool>
              <Ic $w={15} $h={9} $sw={2.4} $c="#222"><path d="M1.500 1.500l6 6 6-6" /></Ic>
            </OutlineTool>
            <OutlineTool>
              <Ic $w={15} $h={9} $sw={2.4} $c="#222"><path d="M1.500 7.500l6-6 6 6" /></Ic>
            </OutlineTool>
            <OutlineTool>
              <Ic $w={15} $h={15} $sw={2.4} $c="#b4b4b4"><path d="M7.500 1v13M1 7.500h13" /></Ic>
            </OutlineTool>
            <OutlineTool>
              <Ic $w={18} $h={3} $sw={2.2} $c="#b4b4b4"><path d="M1 1.500h16" /></Ic>
            </OutlineTool>
          </OutlineTools>
          <EmptyState>
            <EmptyTitle>暂无目录</EmptyTitle>
            <EmptyHint>
              请添加标题
              <br />
              或启用
            </EmptyHint>
            <AiButton>AI 识别目录</AiButton>
          </EmptyState>
        </Panel>

        <DocArea>
          <Sheet>
            <CropMarks>
              <CropMark $side="left" />
              <CropMark $side="right" />
            </CropMarks>
            <PromptRow>
              <DragHandle>
                <i /><i /><i /><i /><i /><i />
              </DragHandle>
              <PromptText>按下两次Ctrl键唤起WPS AI，使用</PromptText>
              <AiChip>
                <Ic $w={26} $h={28} $c="#666" $sw={1.7}>
                  <path d="M14 6c1 5 3 7 9 9-6 1-8 4-9 11-1-7-3-10-9-11 6-2 8-4 9-9z" />
                  <path d="M4 1l.9 2.200 2.200.9-2.200.9L4 7.500l-.9-2.500L.8 4.100l2.300-.9z" fill="#666" stroke="none" />
                </Ic>
                AI 帮我写
              </AiChip>
            </PromptRow>
            <KeysRow>
              <KeyCap>
                <Ic $w={18} $h={28} $c="#6c6c6c" $sw={3}>
                  <path d="M16 2L3 14l13 12" />
                </Ic>
                往左切换
              </KeyCap>
              <KeyCap $on>
                <Ic $w={18} $h={28} $c="#6c6c6c" $sw={3}>
                  <path d="M2 2l13 12L2 26" />
                </Ic>
                往右切换
              </KeyCap>
            </KeysRow>
          </Sheet>
        </DocArea>

        <ScrollColumn>
          <FootToggle />
          <ScrollUp><TriUp /></ScrollUp>
          <ScrollThumb />
          <ScrollFoot>
            <TriDown />
            <FootToggle flip />
          </ScrollFoot>
        </ScrollColumn>

        <SideBar>
          <SideCell $h={38}>
            <Ic $w={22} $h={3} $sw={2.4} $c="#aaa"><path d="M1 1.500h20" /></Ic>
          </SideCell>
          <SideCell><Side.Pencil /></SideCell>
          <SideCell><Side.Cursor /></SideCell>
          <SideCell><Side.Sliders /></SideCell>
          <SideCell><Side.Leaf /></SideCell>
          <SideCell><Side.Wand /></SideCell>
          <SideCell><Side.Help /></SideCell>
          <SideCell><Side.Shirt /></SideCell>
          <SideCell><Side.Dots /></SideCell>
        </SideBar>
      </Main>
    </Page>
  );
}
